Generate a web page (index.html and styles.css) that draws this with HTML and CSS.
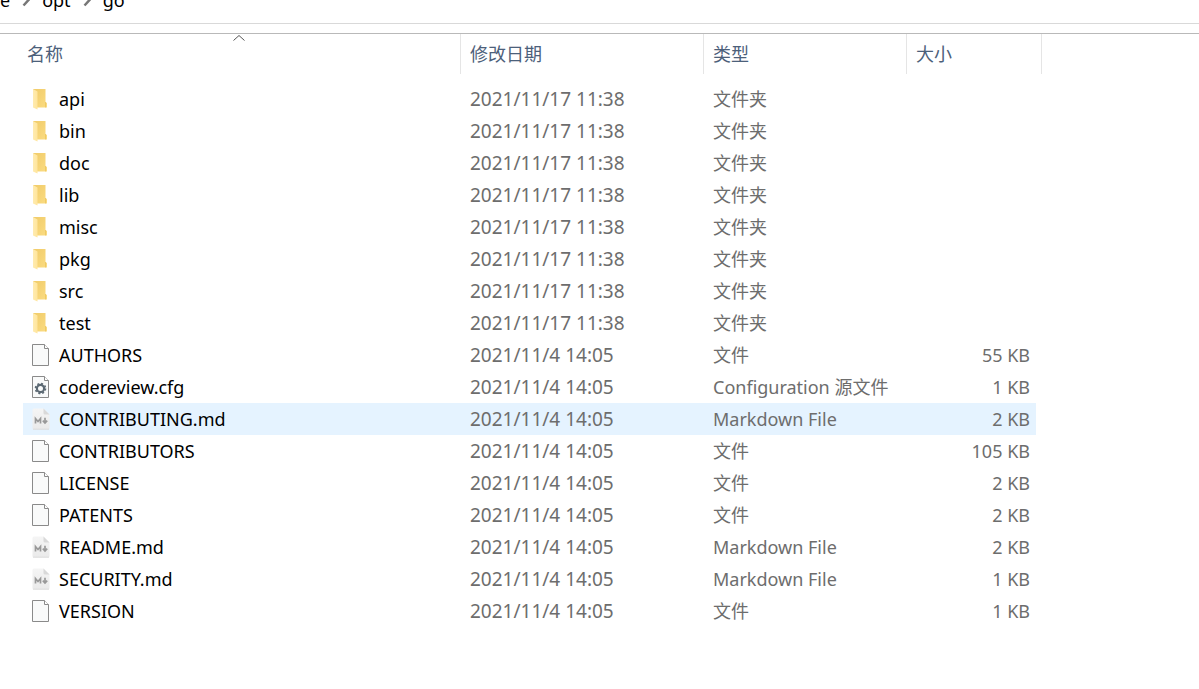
FILE: index.html
```html
<!DOCTYPE html>
<html lang="zh-CN">
<head>
    <meta charset="UTF-8">
    <meta name="viewport" content="width=device-width, initial-scale=1.0">
    <title>go</title>
    <link rel="stylesheet" href="styles.css">
</head>
<body>
    <svg class="sprite" aria-hidden="true">
        <defs>
            <linearGradient id="gold" x1="0" y1="0" x2="1" y2="1">
                <stop offset="0" stop-color="#f0cb69"/>
                <stop offset="1" stop-color="#fbdc82"/>
            </linearGradient>
            <linearGradient id="flap" x1="0" y1="0" x2="1" y2="0">
                <stop offset="0" stop-color="#ffebb0"/>
                <stop offset="1" stop-color="#ffe59c"/>
            </linearGradient>
            <linearGradient id="paper" x1="0" y1="0" x2="0" y2="1">
                <stop offset="0" stop-color="#f5f5f5"/>
                <stop offset="1" stop-color="#eaeaea"/>
            </linearGradient>
        </defs>
        <symbol id="folder" viewBox="0 0 18 22">
            <path d="M1 1h12.500v13l1.500 1v4.500H5z" fill="url(#gold)"/>
            <path d="M1 1l4.500 2.500v18L1 19.500z" fill="url(#flap)"/>
            <path d="M13.500 14v5.500" stroke="#e6bd55" stroke-width=".6"/>
        </symbol>
        <symbol id="file" viewBox="0 0 18 22">
            <path d="M.5.500h12l4 4v17H.5z" fill="#f9fafa" stroke="#8a8a8a"/>
            <path d="M12.500.500v4h4" fill="#fff" stroke="#8a8a8a"/>
        </symbol>
        <symbol id="config" viewBox="0 0 18 22">
            <path d="M.5.500h12l4 4v17H.5z" fill="#f9fafa" stroke="#8a8a8a"/>
            <path d="M12.500.500v4h4" fill="#fff" stroke="#8a8a8a"/>
            <circle cx="8.500" cy="12.500" r="3.600" fill="none" stroke="#5c6973" stroke-width="2.200"/>
            <circle cx="8.500" cy="12.500" r="5" fill="none" stroke="#5c6973" stroke-width="1.600" stroke-dasharray="2 1.927"/>
        </symbol>
        <symbol id="markdown" viewBox="0 0 18 22">
            <path d="M2 .5h9.500l6 6V20a1.500 1.500 0 0 1-1.500 1.500H2A1.500 1.500 0 0 1 .5 20V2A1.500 1.500 0 0 1 2 .5z" fill="url(#paper)"/>
            <path d="M11.500.500l6 6h-4.500a1.500 1.500 0 0 1-1.500-1.500z" fill="#d9d9d9"/>
            <path d="M1 21.200h16" stroke="#d8d8d8" stroke-width=".8"/>
            <path d="M3.500 15.500v-5l2.500 3 2.500-3v5" fill="none" stroke="#999" stroke-width="1.700"/>
            <path d="M13 9.800v4.500M10.800 12.600l2.200 2.400 2.200-2.400" fill="none" stroke="#999" stroke-width="1.700"/>
        </symbol>
        <symbol id="chevron" viewBox="0 0 8 14">
            <path d="M1.500 1.500L6.500 7l-5 5.500" fill="none" stroke="#777" stroke-width="2.500"/>
        </symbol>
    </svg>

    <nav class="address-bar">
        <a href="#">e</a>
        <svg class="chevron"><use href="#chevron"/></svg>
        <a href="#">opt</a>
        <svg class="chevron"><use href="#chevron"/></svg>
        <a href="#">go</a>
    </nav>

    <main class="file-pane">
        <table class="file-list">
            <colgroup>
                <col>
                <col class="col-date">
                <col class="col-type">
                <col class="col-size">
            </colgroup>
            <thead>
                <tr>
                    <th>
                        <svg class="sort-arrow" viewBox="0 0 12 6"><path d="M.5 5.500L6 .5l5.500 5" fill="none" stroke="#555"/></svg>
                        <button type="button">名称</button>
                    </th>
                    <th><button type="button">修改日期</button></th>
                    <th><button type="button">类型</button></th>
                    <th><button type="button">大小</button></th>
                </tr>
            </thead>
            <tbody>
                <tr><td><a href="#"><svg class="icon"><use href="#folder"/></svg>api</a></td><td class="date">2021/11/17 11:38</td><td>文件夹</td><td class="size"></td></tr>
                <tr><td><a href="#"><svg class="icon"><use href="#folder"/></svg>bin</a></td><td class="date">2021/11/17 11:38</td><td>文件夹</td><td class="size"></td></tr>
                <tr><td><a href="#"><svg class="icon"><use href="#folder"/></svg>doc</a></td><td class="date">2021/11/17 11:38</td><td>文件夹</td><td class="size"></td></tr>
                <tr><td><a href="#"><svg class="icon"><use href="#folder"/></svg>lib</a></td><td class="date">2021/11/17 11:38</td><td>文件夹</td><td class="size"></td></tr>
                <tr><td><a href="#"><svg class="icon"><use href="#folder"/></svg>misc</a></td><td class="date">2021/11/17 11:38</td><td>文件夹</td><td class="size"></td></tr>
                <tr><td><a href="#"><svg class="icon"><use href="#folder"/></svg>pkg</a></td><td class="date">2021/11/17 11:38</td><td>文件夹</td><td class="size"></td></tr>
                <tr><td><a href="#"><svg class="icon"><use href="#folder"/></svg>src</a></td><td class="date">2021/11/17 11:38</td><td>文件夹</td><td class="size"></td></tr>
                <tr><td><a href="#"><svg class="icon"><use href="#folder"/></svg>test</a></td><td class="date">2021/11/17 11:38</td><td>文件夹</td><td class="size"></td></tr>
                <tr><td><a href="#"><svg class="icon"><use href="#file"/></svg>AUTHORS</a></td><td class="date">2021/11/4 14:05</td><td>文件</td><td class="size">55 KB</td></tr>
                <tr><td><a href="#"><svg class="icon"><use href="#config"/></svg>codereview.cfg</a></td><td class="date">2021/11/4 14:05</td><td>Configuration 源文件</td><td class="size">1 KB</td></tr>
                <tr class="hovered"><td><a href="#"><svg class="icon"><use href="#markdown"/></svg>CONTRIBUTING.md</a></td><td class="date">2021/11/4 14:05</td><td>Markdown File</td><td class="size">2 KB</td></tr>
                <tr><td><a href="#"><svg class="icon"><use href="#file"/></svg>CONTRIBUTORS</a></td><td class="date">2021/11/4 14:05</td><td>文件</td><td class="size">105 KB</td></tr>
                <tr><td><a href="#"><svg class="icon"><use href="#file"/></svg>LICENSE</a></td><td class="date">2021/11/4 14:05</td><td>文件</td><td class="size">2 KB</td></tr>
                <tr><td><a href="#"><svg class="icon"><use href="#file"/></svg>PATENTS</a></td><td class="date">2021/11/4 14:05</td><td>文件</td><td class="size">2 KB</td></tr>
                <tr><td><a href="#"><svg class="icon"><use href="#markdown"/></svg>README.md</a></td><td class="date">2021/11/4 14:05</td><td>Markdown File</td><td class="size">2 KB</td></tr>
                <tr><td><a href="#"><svg class="icon"><use href="#markdown"/></svg>SECURITY.md</a></td><td class="date">2021/11/4 14:05</td><td>Markdown File</td><td class="size">1 KB</td></tr>
                <tr><td><a href="#"><svg class="icon"><use href="#file"/></svg>VERSION</a></td><td class="date">2021/11/4 14:05</td><td>文件</td><td class="size">1 KB</td></tr>
            </tbody>
        </table>
    </main>
</body>
</html>
```
FILE: styles.css
```css
body {
    margin: 0;
    background-color: #fff;
    color: #000;
    font-family: "Noto Sans", "Noto Sans CJK SC", sans-serif;
    font-size: 18px;
    line-height: 24px;
}

a {
    color: inherit;
    text-decoration: none;
}

/* kept rendered, the icon gradients do not work from display: none */
.sprite {
    position: absolute;
    width: 0;
    height: 0;
}

/* address bar */
.address-bar {
    display: flex;
    align-items: center;
    gap: 12px;
    height: 24px;
    margin-top: -12px;
    padding-bottom: 11px;
    border-bottom: 1px solid #d9d9d9;
}

.chevron {
    width: 8px;
    height: 14px;
}

/* file list */
.file-pane {
    margin-top: 9px;
    padding: 0 157px 0 18px;
    border-top: 1px solid #b9b9b9;
}

.file-list {
    width: 100%;
    table-layout: fixed;
    border-collapse: separate;
    border-spacing: 0;
}

.col-date {
    width: 243px;
}

.col-type {
    width: 203px;
}

.col-size {
    width: 135px;
}

.file-list th {
    position: relative;
    height: 40px;
    padding: 0;
    border-right: 1px solid #e5e5e5;
    text-align: left;
}

.file-list th button {
    display: block;
    width: 100%;
    height: 40px;
    padding: 0 9px;
    border: none;
    background: none;
    color: #4c607a;
    font: inherit;
    font-weight: 400;
    text-align: left;
}

.sort-arrow {
    position: absolute;
    top: 1px;
    left: 50%;
    width: 12px;
    height: 6px;
    margin-left: -6px;
}

.file-list tbody::before {
    content: "";
    display: block;
    height: 9px;
}

.file-list td {
    height: 32px;
    padding: 0 9px;
    color: #6d6d6d;
    background-clip: padding-box;
    white-space: nowrap;
}

.file-list td:first-child {
    border-left: 5px solid transparent;
    color: #000;
}

.file-list td:last-child {
    border-right: 6px solid transparent;
}

.file-list td a {
    display: flex;
    align-items: center;
    gap: 9px;
}

.file-list .date {
    font-size: 19px;
}

.file-list .size {
    padding-right: 6px;
    text-align: right;
}

.file-list .hovered td {
    background-color: #e5f3ff;
}

.icon {
    width: 18px;
    height: 22px;
}
```
